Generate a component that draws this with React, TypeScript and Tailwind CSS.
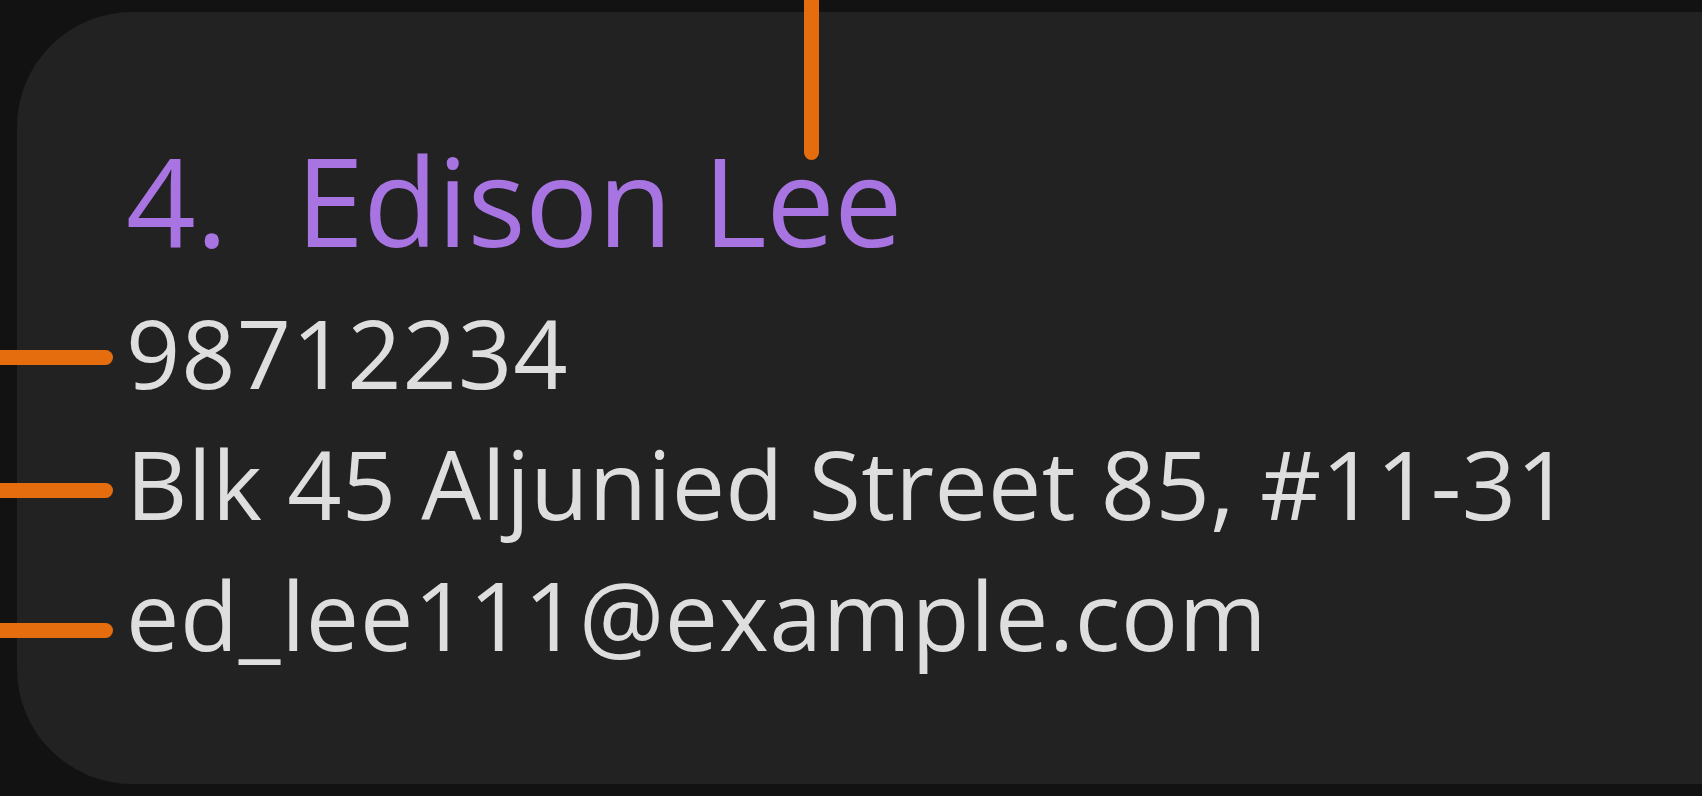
import React from "react";

export default function App() {
  return (
    <div className="relative w-[1702px] h-[796px] overflow-hidden bg-[#121212] pt-[12px] pb-[12px] pl-[17px]">
      <div className="h-full w-full rounded-l-[115px] bg-[#222222] pl-[109px] pt-[118px] [font-family:'Open_Sans',sans-serif]">
        <div className="flex h-[140px] text-[122px] font-medium leading-[140px] text-[#a874e2] whitespace-nowrap">
          <span className="w-[170px]">4.</span>
          <span className="tracking-[-0.6px]">Edison Lee</span>
        </div>
        <div className="mt-[17px] flex flex-col text-[95px] leading-[131px] text-[#dedede] whitespace-nowrap">
          <span className="tracking-[1px]">98712234</span>
          <span className="tracking-[0.3px]">Blk 45 Aljunied Street 85, #11-31</span>
          <span className="tracking-[0.7px]">ed_lee111@example.com</span>
        </div>
      </div>
      <div className="absolute left-[804px] top-[-20px] h-[180px] w-[15px] rounded-full bg-[#e56d0e]" />
      <div className="absolute left-[-20px] top-[350px] h-[15px] w-[133px] rounded-full bg-[#e56d0e]" />
      <div className="absolute left-[-20px] top-[483px] h-[15px] w-[133px] rounded-full bg-[#e56d0e]" />
      <div className="absolute left-[-20px] top-[623px] h-[15px] w-[133px] rounded-full bg-[#e56d0e]" />
    </div>
  );
}
